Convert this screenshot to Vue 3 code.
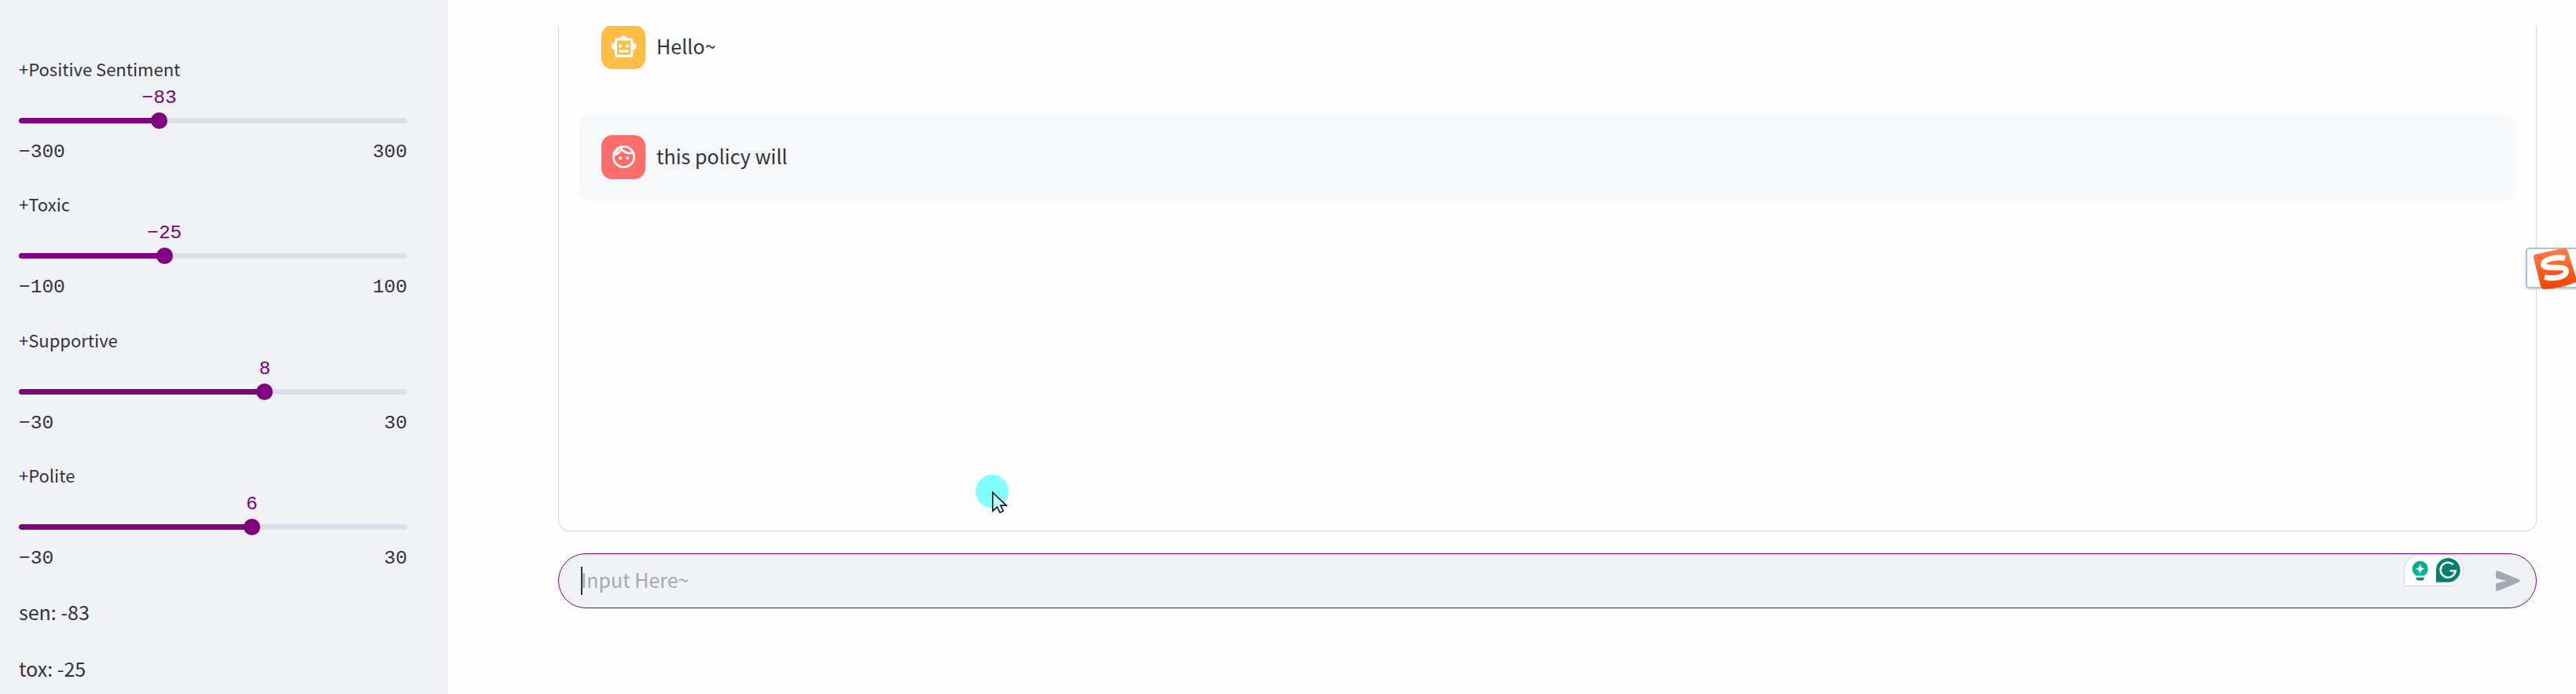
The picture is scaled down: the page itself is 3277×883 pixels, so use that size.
<script setup>
const sliders = [
  { name: '+Positive Sentiment', value: -83, limit: 300 },
  { name: '+Toxic', value: -25, limit: 100 },
  { name: '+Supportive', value: 8, limit: 30 },
  { name: '+Polite', value: 6, limit: 30 },
]
const pct = (s) => ((s.value + s.limit) / (2 * s.limit)) * 100 + '%'
const fmt = (n) => String(n).replace('-', '−')
</script>

<template>
  <div class="app">
    <aside class="sidebar">
      <div class="sliders">
        <section v-for="s in sliders" :key="s.name" class="slider">
          <div class="label"><span>{{ s.name }}</span></div>
          <div class="value-row"><span class="value" :style="{ left: pct(s) }">{{ fmt(s.value) }}</span></div>
          <div class="track">
            <div class="fill" :style="{ width: pct(s) }"></div>
            <div class="knob" :style="{ left: pct(s) }"></div>
          </div>
          <div class="range"><span>{{ fmt(-s.limit) }}</span><span>{{ s.limit }}</span></div>
        </section>
      </div>
      <div class="readout">
        <p>sen: -83</p>
        <p>tox: -25</p>
      </div>
    </aside>

    <main class="main">
      <div class="chat">
        <div class="message">
          <div class="avatar bot">
            <svg width="56" height="56" viewBox="0 0 56 56">
              <path fill="#fff" fill-rule="evenodd" d="M24.3 16.5a4.2 4.2 0 0 1 8.2 0h4.8a3 3 0 0 1 3 3v2.9a4.4 4.4 0 0 1 0 8.8v6.5a3 3 0 0 1-3 3H20a3 3 0 0 1-3-3v-6.5a4.4 4.4 0 0 1 0-8.8v-2.9a3 3 0 0 1 3-3zM20 19.500v18.200h17.300v-18.200z" />
              <circle cx="24.200" cy="26.400" r="2.200" fill="#fff" />
              <circle cx="33" cy="26.400" r="2.200" fill="#fff" />
              <path fill="#fff" d="M22.800 31.500h11.700v3h-11.700z" />
            </svg>
          </div>
          <p>Hello~</p>
        </div>
        <div class="message user">
          <div class="avatar human">
            <svg width="56" height="56" viewBox="0 0 56 56">
              <g fill="none" stroke="#fff" stroke-width="2.800">
                <circle cx="28.500" cy="27.500" r="13.200" />
                <path d="M24.500 16.500c3.500 5.300 9 7 15.500 6.300" />
                <path d="M25.300 17.500c-1.500 4-4.500 6.500-8.800 8" stroke-width="2.400" />
                <path d="M21.800 18.500l-3.500 4.300" stroke-width="1.600" />
              </g>
              <circle cx="24.200" cy="29" r="1.900" fill="#fff" />
              <circle cx="33" cy="29" r="1.900" fill="#fff" />
            </svg>
          </div>
          <p>this policy will</p>
        </div>
      </div>

      <div class="composer">
        <div class="caret"></div>
        <div class="placeholder">Input Here~</div>
        <svg class="send" width="31" height="26" viewBox="0 0 31 26">
          <path fill="#a5a7b4" d="M0 2.300C0 .6 1.500-.4 3 .2L29.500 11.200c1.600.7 1.600 2.900 0 3.600L3 25.800c-1.500.6-3-.4-3-2.100V17.800c0-.9.6-1.700 1.500-1.900L13.300 13 1.500 10.100C.6 9.900 0 9.100 0 8.200z" />
        </svg>
        <div class="assist">
          <svg width="77" height="42" viewBox="0 0 77 42">
            <defs>
              <linearGradient id="bulb" x1="0" y1="0" x2="0" y2="1">
                <stop offset="0" stop-color="#08a688" />
                <stop offset="1" stop-color="#00bd9a" />
              </linearGradient>
            </defs>
            <path d="M20.500.5h35.500a20 20 0 0 1 0 40H.5v-20a20 20 0 0 1 20-20z" fill="#fff" stroke="#d3d6e3" />
            <path d="M15.500 27.500c-3-2-4.800-5.200-4.800-8.800a10 10 0 0 1 20 0c0 3.600-1.800 6.800-4.800 8.800z" fill="url(#bulb)" />
            <path d="M20.700 12.500c.9 4 2.200 5.300 6 6.200-3.800.9-5.100 2.200-6 6.200-.9-4-2.200-5.300-6-6.200 3.800-.9 5.100-2.200 6-6.200z" fill="#fff" />
            <path d="M15.600 29.700h10.300v.8a3 3 0 0 1-3 3h-4.300a3 3 0 0 1-3-3z" fill="#078b78" />
            <path d="M56.300 5a15.400 15.400 0 0 1 0 30.800H41V20.400A15.400 15.400 0 0 1 56.300 5z" fill="#027e6f" />
            <path d="M62.800 13.400A9.500 9.500 0 1 0 65.600 21.300H58.500" fill="none" stroke="#fff" stroke-width="2.600" />
          </svg>
        </div>
      </div>
    </main>

    <div class="ime">
      <svg width="64" height="54" viewBox="0 0 64 54">
        <defs>
          <linearGradient id="tile" x1="0" y1="0" x2="0" y2="1">
            <stop offset="0" stop-color="#ff7d49" />
            <stop offset="1" stop-color="#f34300" />
          </linearGradient>
        </defs>
        <path d="M13 8.500L49 .5q3-.5 4 2.500L64 38v6Q44 52 24 53q-4 0-5-4L10 12.500q-.5-3 3-4z" fill="url(#tile)" />
        <path d="M50 13.500C41 11.500 23 14 22.500 21.500 22 29 51 21.500 51.500 29.500 52 38 34 40.500 24 37.500" fill="none" stroke="#fff" stroke-width="7" />
      </svg>
    </div>

    <svg class="pointer" width="46" height="52" viewBox="0 0 46 52">
      <circle cx="21" cy="21" r="21" fill="#80ffff" />
      <path d="M21.800 22.500V46l5.700-5 3.600 7.200 4.200-2-3.400-7h7.300z" fill="#fff" fill-opacity=".5" stroke="#06252b" stroke-width="1.700" />
    </svg>
  </div>
</template>

<style>
body { margin: 0; background: #fefefe; overflow: hidden; }
</style>

<style scoped>
.app {
  position: relative;
  display: flex;
  width: 3277px;
  height: 883px;
  overflow: hidden;
  background: #fefefe;
  color: #31333f;
  font-family: "Noto Sans CJK SC", "Noto Sans", sans-serif;
}
p { margin: 0; }
.sidebar {
  box-sizing: border-box;
  flex: none;
  width: 570px;
  height: 883px;
  padding: 72px 52px 0 24px;
  background: #f0f2f6;
}
.sliders { display: flex; flex-direction: column; gap: 36.330px; }
.label { height: 30px; margin-bottom: 9px; font-size: 22px; line-height: 30px; white-space: nowrap; }
.value-row { position: relative; height: 28px; margin-bottom: 11px; }
.value {
  position: absolute;
  top: 0;
  transform: translateX(-50%);
  color: #800080;
}
.value, .range { font: 24.500px/28px "Liberation Mono", monospace; }
.track { position: relative; height: 7px; margin-bottom: 23px; border-radius: 4px; background: #dadfe9; }
.fill { height: 7px; border-radius: 4px; background: #800080; }
.knob {
  position: absolute;
  top: -7px;
  width: 21px;
  height: 21px;
  margin-left: -10.500px;
  border-radius: 50%;
  background: #800080;
}
.range { display: flex; justify-content: space-between; height: 28px; }
.readout { display: flex; flex-direction: column; gap: 30px; margin-top: 32px; font-size: 25px; line-height: 42px; }
.main { flex: none; width: 2517px; padding: 33px 0 0 140px; }
.chat {
  box-sizing: border-box;
  height: 643px;
  border: 1px solid #d5d6da;
  border-top: 0;
  border-radius: 0 0 14px 14px;
  padding: 0 26px;
  overflow: hidden;
}
.message {
  display: flex;
  align-items: center;
  gap: 14px;
  box-sizing: border-box;
  height: 112px;
  margin-top: -29px;
  padding: 28px;
  border-radius: 14px;
  font-size: 25.100px;
  line-height: 42px;
}
.message p { margin-bottom: 4px; }
.message.user { margin-top: 28px; background: #f7f8fa; }
.avatar { flex: none; width: 56px; height: 56px; border-radius: 14px; }
.avatar svg { display: block; }
.bot { background: #ffbd45; }
.human { background: #ff6c6c; }
.composer {
  position: relative;
  display: flex;
  align-items: center;
  box-sizing: border-box;
  height: 70px;
  margin-top: 28px;
  padding: 0 20px 0 28px;
  border: 1px solid #800080;
  border-radius: 35px;
  background: #f0f2f6;
}
.caret { width: 2px; height: 36px; background: #31333f; }
.placeholder { flex: 1; margin: 0 0 4px -2px; color: #a5a7b0; font-size: 25px; line-height: 42px; }
.send { flex: none; }
.assist { position: absolute; top: 0; right: 91px; height: 42px; }
.assist svg { display: block; }
.ime {
  position: absolute;
  left: 3213px;
  top: 315px;
  box-sizing: border-box;
  width: 80px;
  height: 52px;
  border: 2px solid #b3c0cd;
  border-radius: 5px;
  background: #fff;
  box-shadow: 0 1px 3px #c5ccd4;
}
.ime svg { position: absolute; left: -2px; top: -2px; }
.pointer { position: absolute; left: 1241px; top: 604px; }
</style>
